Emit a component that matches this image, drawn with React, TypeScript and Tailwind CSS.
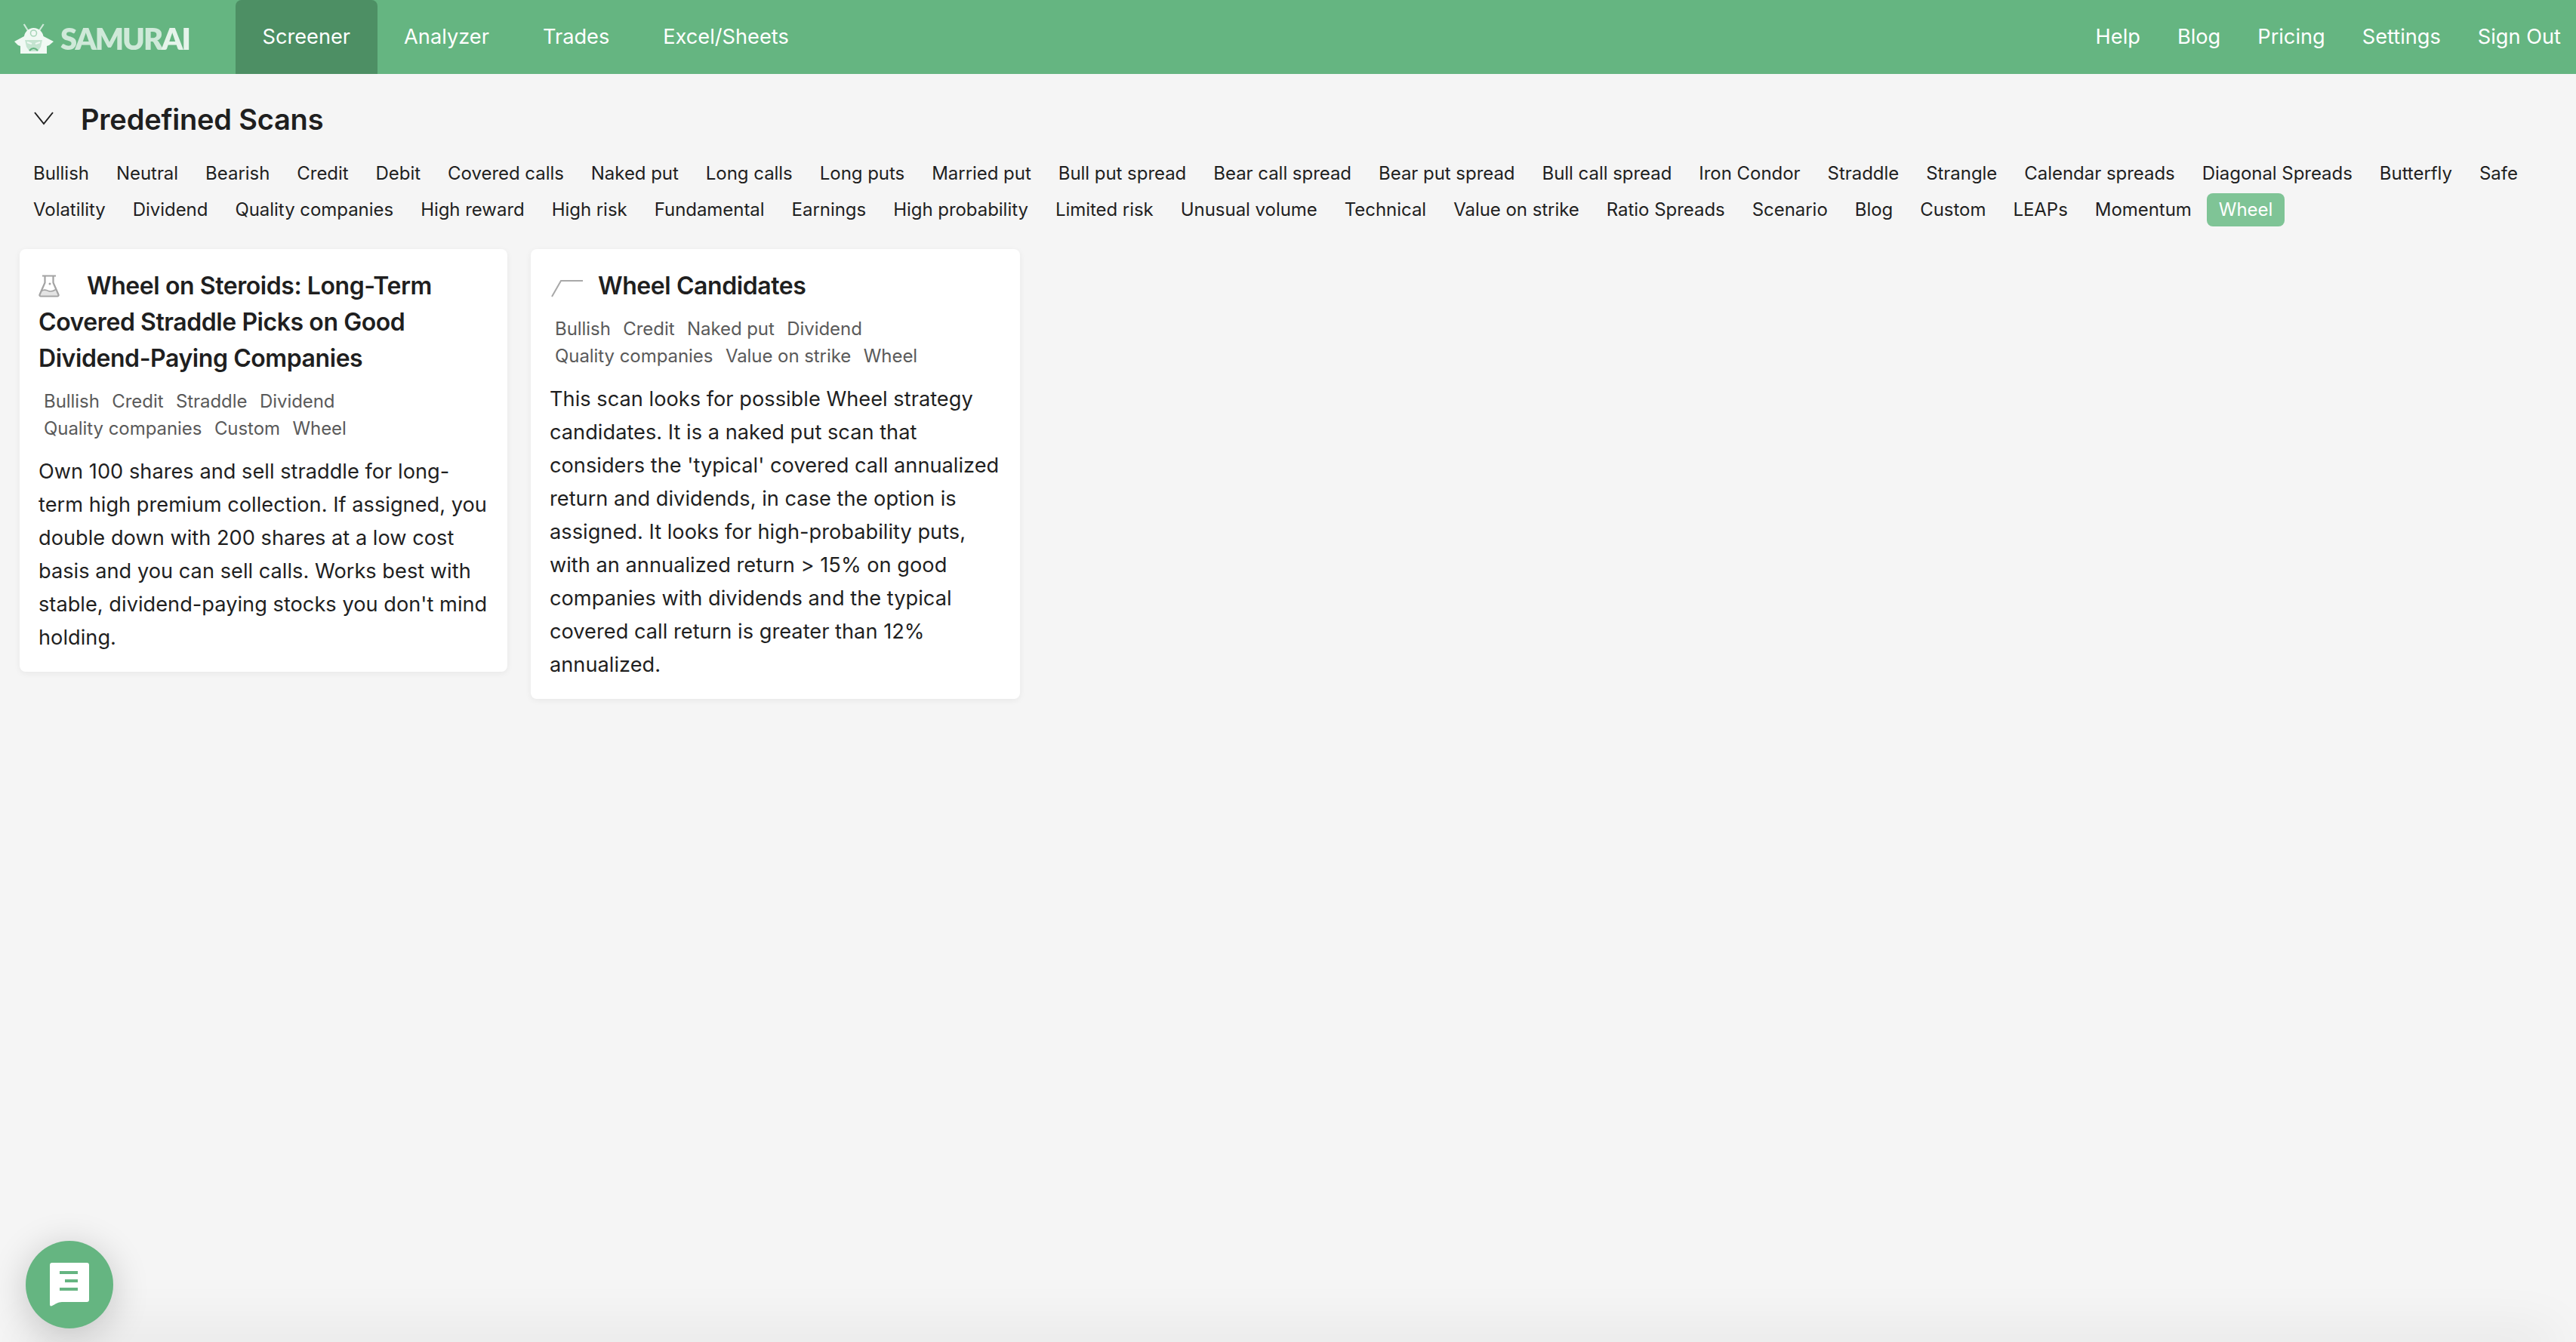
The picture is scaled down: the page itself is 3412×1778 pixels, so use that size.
const topLinks = ["Screener", "Analyzer", "Trades", "Excel/Sheets"];
const rightLinks = ["Help", "Blog", "Pricing", "Settings", "Sign Out"];
const chips = [
  "Bullish", "Neutral", "Bearish", "Credit", "Debit", "Covered calls", "Naked put", "Long calls", "Long puts",
  "Married put", "Bull put spread", "Bear call spread", "Bear put spread", "Bull call spread", "Iron Condor",
  "Straddle", "Strangle", "Calendar spreads", "Diagonal Spreads", "Butterfly", "Safe", "Volatility", "Dividend",
  "Quality companies", "High reward", "High risk", "Fundamental", "Earnings", "High probability", "Limited risk",
  "Unusual volume", "Technical", "Value on strike", "Ratio Spreads", "Scenario", "Blog", "Custom", "LEAPs",
  "Momentum", "Wheel",
];

function FlaskIcon() {
  return (
    <svg viewBox="0 0 28 30" className="w-[28px] h-[30px]" fill="none" stroke="#a3a3a3" strokeWidth="2.200" strokeLinejoin="round">
      <path d="M3 22c4-3 6-1 9 0s7 0 11-2l3 7.500H2z" fill="#e4e4e4" stroke="none" />
      <path d="M5 1.500h18M8.500 1.500v9L1.500 26.500a1.500 1.500 0 0 0 1.500 2h22a1.500 1.500 0 0 0 1.500-2l-7-16v-9" />
      <path d="M4 21.500c4-3 6-1 9 0s7 0 10-2" strokeWidth="1.600" />
      <circle cx="15" cy="12" r="1.500" fill="#a3a3a3" stroke="none" />
    </svg>
  );
}

function PayoffIcon() {
  return (
    <svg viewBox="0 0 44 24" className="w-[44px] h-[24px]" fill="none" stroke="#a8a8a8" strokeWidth="2">
      <path d="M3 23L15 2h29" />
    </svg>
  );
}

function LogoIcon() {
  return (
    <svg viewBox="0 0 52 40" className="w-[52px] h-[40px] blur-[0.5px]" fill="#f1f9f4">
      <path d="M12.700 1l5.600 9M38.700 1l-6 9" stroke="#cfe9d9" strokeWidth="2.200" fill="none" />
      <path d="M25.500 6c7 0 12 5 13 11l13.500 7-6 5-3 1v10H8V30l-3-1-5-5 13-7c1-6 6-11 12.500-11z" />
      <circle cx="25.500" cy="13" r="4" fill="none" stroke="#a8d6b9" strokeWidth="1.600" />
      <path d="M14 22h23l-2 9-4 6H20l-4-6z" fill="#c4e4d0" />
      <path d="M17 25l6 2M34 25l-6 2" stroke="#f1f9f4" strokeWidth="2" fill="none" />
      <path d="M20 36q5.500-6 11 0" stroke="#65b581" strokeWidth="2" fill="none" />
    </svg>
  );
}

function Tags({ items }: { items: string[][] }) {
  return (
    <div className="text-[24px] leading-[36px] text-[#5a5a5a] tracking-[-0.06px]">
      {items.map((row, i) => (
        <div key={i} className="flex gap-[16.5px] pl-[7px]">
          {row.map((t) => (
            <span key={t}>{t}</span>
          ))}
        </div>
      ))}
    </div>
  );
}

function ScanCard({
  icon,
  title,
  tags,
  body,
  className,
}: {
  icon: React.ReactNode;
  title: string;
  tags: string[][];
  body: string;
  className: string;
}) {
  return (
    <div className={`bg-white rounded-[8px] shadow-[0_2px_8px_rgba(0,0,0,0.06)] pl-[25px] pr-[22px] pt-[25px] pb-[23px] ${className}`}>
      <h3 className="text-[32px] leading-[48px] font-semibold text-[#1f1f1f] tracking-[-0.43px] mb-[15px]">
        <span className="inline-block w-[64px] align-[-4px]">{icon}</span>
        {title}
      </h3>
      <Tags items={tags} />
      <p className="mt-[17px] text-[27.2px] leading-[44px] text-[#1f1f1f] tracking-[0.02px]">{body}</p>
    </div>
  );
}

export default function App() {
  return (
    <div className="relative h-[1778px] overflow-hidden bg-[#f5f5f5] font-['Inter',sans-serif] antialiased">
      {/* Top nav */}
      <nav className="h-[98px] bg-[#65b581] flex items-stretch justify-between text-white text-[27.2px]">
        <div className="flex items-stretch">
          <div className="flex items-center w-[312px] pl-[19px] gap-[9px] pt-[4px]">
            <LogoIcon />
            <span className="font-['Lato',sans-serif] font-extrabold text-[40px] leading-none tracking-[-2.1px] text-[#cfe9d9] blur-[0.5px]">
              SAMUR<span className="text-[#e6f4eb]">AI</span>
            </span>
          </div>
          {topLinks.map((l, i) => (
            <a
              key={l}
              className={`flex items-center px-[35.5px] rounded-t-[8px] ${i === 0 ? "bg-[#4d8f64]" : ""}`}
            >
              {l}
            </a>
          ))}
        </div>
        <div className="flex items-center gap-[49px] pr-[20px]">
          {rightLinks.map((l) => (
            <a key={l}>{l}</a>
          ))}
        </div>
      </nav>

      {/* Predefined scans */}
      <div className="flex items-center h-[60px] mt-[30px] pl-[45px]">
        <svg viewBox="0 0 26 18" className="w-[26px] h-[18px] mr-[36px] -mt-[3px]" fill="none" stroke="#1f1f1f" strokeWidth="2">
          <path d="M1 1l12 15L25 1" />
        </svg>
        <h2 className="text-[38px] leading-[60px] font-semibold text-[#1f1f1f] tracking-[-0.2px]">Predefined Scans</h2>
      </div>

      <div className="flex flex-wrap mt-[18px] px-[26px] text-[24px] text-[#1f1f1f] tracking-[-0.04px]">
        {chips.map((c) => (
          <span
            key={c}
            className={`m-[2px] h-[44px] leading-[44px] px-[16px] rounded-[8px] ${c === "Wheel" ? "bg-[#7fc496] text-white" : ""}`}
          >
            {c}
          </span>
        ))}
      </div>

      <div className="flex items-start gap-[31px] mt-[28px] pl-[26px]">
        <ScanCard
          className="w-[646px]"
          icon={<FlaskIcon />}
          title="Wheel on Steroids: Long-Term Covered Straddle Picks on Good Dividend-Paying Companies"
          tags={[
            ["Bullish", "Credit", "Straddle", "Dividend"],
            ["Quality companies", "Custom", "Wheel"],
          ]}
          body="Own 100 shares and sell straddle for long-term high premium collection. If assigned, you double down with 200 shares at a low cost basis and you can sell calls. Works best with stable, dividend-paying stocks you don't mind holding."
        />
        <ScanCard
          className="w-[648px]"
          icon={<PayoffIcon />}
          title="Wheel Candidates"
          tags={[
            ["Bullish", "Credit", "Naked put", "Dividend"],
            ["Quality companies", "Value on strike", "Wheel"],
          ]}
          body="This scan looks for possible Wheel strategy candidates. It is a naked put scan that considers the 'typical' covered call annualized return and dividends, in case the option is assigned. It looks for high-probability puts, with an annualized return > 15% on good companies with dividends and the typical covered call return is greater than 12% annualized."
        />
      </div>

      {/* faint shade along the bottom edge */}
      <div className="absolute left-[40px] right-[40px] top-[1778px] h-[10px] shadow-[0_0_70px_12px_rgba(0,0,0,0.09)]" />

      {/* Chat launcher */}
      <button className="absolute left-[34px] top-[1644px] w-[116px] h-[116px] rounded-full bg-[#65b581] flex items-center justify-center shadow-[0_8px_50px_rgba(0,0,0,0.2)]">
        <svg viewBox="0 0 52 58" className="w-[52px] h-[58px]">
          <path
            d="M3 0h46a3 3 0 0 1 3 3v46a3 3 0 0 1-3 3H16c-5 0-9 3-13 5-2 1-3 0-3-2V3a3 3 0 0 1 3-3z"
            fill="#fff"
          />
          <path d="M13 11h24v4H13zM20 22h17v4H20zM13 33h24v4H13z" fill="#65b581" />
        </svg>
      </button>
    </div>
  );
}
